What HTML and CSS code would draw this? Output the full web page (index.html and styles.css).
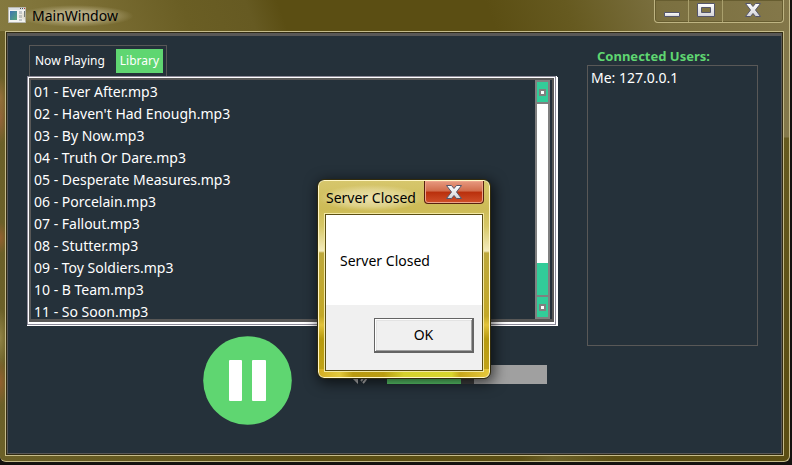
FILE: index.html
```html
<!DOCTYPE html>
<html lang="en">
<head>
<meta charset="utf-8">
<title>MainWindow</title>
<link rel="stylesheet" href="styles.css">
</head>
<body>
<div class="window">
  <header class="titlebar">
    <svg class="app-icon" width="18" height="16" viewBox="0 0 18 16" aria-hidden="true">
      <defs>
        <linearGradient id="pane" x1="0" y1="0" x2="1" y2="1"><stop offset="0" stop-color="#3d74b4"/><stop offset="1" stop-color="#58a878"/></linearGradient>
        <linearGradient id="glyph" x1="0" y1="0" x2="0" y2="1"><stop offset="0" stop-color="#fff"/><stop offset="1" stop-color="#d4d4d8"/></linearGradient>
      </defs>
      <path fill="#f4f4f2" stroke="#b8b8b0" d="M.5 .5h17v15H.5z"/>
      <path fill="#dce0e2" d="M1 1h16v2H1z"/>
      <path fill="#4b5258" d="M12 1h1v1h-1zM14 1h1v1h-1z"/><path fill="#c03a2c" d="M16 1h1v1h-1z"/>
      <path fill="url(#pane)" d="M2 4h7v9H2z"/>
      <path fill="#c4c8cb" d="M11 4h3v3h-3zM11 8h3v3h-3zM11 12h3v2h-3z"/>
      <path fill="#64707a" d="M16 4h1v6h-1z"/>
    </svg>
    <h1 class="title">MainWindow</h1>
    <div class="caption-buttons">
      <button type="button" class="caption" aria-label="Minimize"><svg width="18" height="14" viewBox="0 0 18 14"><path fill="url(#glyph)" stroke="#55566a" d="M1.500 9.500h15v4h-15z"/></svg></button>
      <button type="button" class="caption" aria-label="Maximize"><svg width="18" height="14" viewBox="0 0 18 14"><path fill="url(#glyph)" fill-rule="evenodd" stroke="#55566a" d="M.5 .5h17v13H.5zM4.500 4.500v5h9v-5z"/></svg></button>
      <button type="button" class="caption caption-wide" aria-label="Close"><svg width="16" height="14" viewBox="0 0 16 14"><path fill="url(#glyph)" stroke="#55566a" d="M.5 .5h5L8 3.500 10.500.5h5L10.500 7l5 6.500h-5L8 10.500 5.500 13.500h-5L5.500 7z"/></svg></button>
    </div>
  </header>

  <main class="client">
    <section class="player">
      <nav class="tabs">
        <button type="button" class="tab">Now Playing</button>
        <button type="button" class="tab tab-active">Library</button>
      </nav>
      <div class="library">
        <div class="library-inner">
          <ul class="tracks">
            <li>01 - Ever After.mp3</li>
            <li>02 - Haven't Had Enough.mp3</li>
            <li>03 - By Now.mp3</li>
            <li>04 - Truth Or Dare.mp3</li>
            <li>05 - Desperate Measures.mp3</li>
            <li>06 - Porcelain.mp3</li>
            <li>07 - Fallout.mp3</li>
            <li>08 - Stutter.mp3</li>
            <li>09 - Toy Soldiers.mp3</li>
            <li>10 - B Team.mp3</li>
            <li>11 - So Soon.mp3</li>
          </ul>
          <div class="scrollbar">
            <button type="button" class="step" aria-label="Scroll up"></button>
            <div class="groove"><div class="thumb"></div></div>
            <button type="button" class="step" aria-label="Scroll down"></button>
          </div>
        </div>
      </div>
      <div class="controls">
        <button type="button" class="pause" aria-label="Pause">
          <svg width="89" height="89" viewBox="0 0 89 89"><circle cx="44.500" cy="44.500" r="44.300" fill="#5fd671"/><rect x="26" y="24" width="13" height="41" rx="1" fill="#fff"/><rect x="49" y="24" width="14" height="41" rx="1" fill="#fff"/></svg>
        </button>
        <div class="volume">
          <svg width="20" height="20" viewBox="0 0 20 20" aria-hidden="true"><path fill="#c4c4c4" d="M0 7h2l5-5v18l-7-7z"/><path fill="none" stroke="#c4c4c4" stroke-width="2" d="M10 17q5-5 0-11M12 19q9-9 0-17"/></svg>
          <input class="slider" type="range" min="0" max="100" value="50" aria-label="Volume">
        </div>
      </div>
    </section>

    <aside class="users">
      <h2 class="users-title">Connected Users:</h2>
      <ul class="users-list"><li>Me: 127.0.0.1</li></ul>
    </aside>
  </main>
</div>

<div class="dialog" role="dialog" aria-labelledby="dialog-title">
  <header class="dialog-bar">
    <h2 class="dialog-title" id="dialog-title">Server Closed</h2>
    <button type="button" class="dialog-close" aria-label="Close"><svg width="16" height="14" viewBox="0 0 16 14"><path fill="url(#glyph)" stroke="#55566a" d="M.5 .5h5L8 3.500 10.500.5h5L10.500 7l5 6.500h-5L8 10.500 5.500 13.500h-5L5.500 7z"/></svg></button>
  </header>
  <div class="dialog-body">
    <p class="message">Server Closed</p>
    <footer class="dialog-footer"><button type="button" class="ok">OK</button></footer>
  </div>
</div>
</body>
</html>
```
FILE: styles.css
```css
* { box-sizing: border-box; }

body {
  margin: 0;
  height: 100vh;
  padding: 0 2px 3px 0;
  overflow: hidden;
  background: #14120f;
  color: #fff;
  font: 14px/22px "Noto Sans", "Open Sans", sans-serif;
}

h1, h2, p, ul { margin: 0; padding: 0; font: inherit; list-style: none; }
button { margin: 0; padding: 0; border: 0; background: none; color: inherit; font: inherit; }
svg { display: block; }

.window {
  display: flex;
  flex-direction: column;
  height: 100%;
  padding: 0 5px 5px;
  border: solid #c5bb8a;
  border-width: 0 1px 1px 0;
  border-radius: 0 0 6px 6px;
  background:
    radial-gradient(ellipse 8px 22px at 0 98px, #96703a, transparent),
    radial-gradient(ellipse 8px 26px at 0 118px, #97643a, transparent),
    radial-gradient(ellipse 8px 16px at 0 238px, #95602f, transparent),
    radial-gradient(ellipse 8px 24px at 0 382px, #94602e, transparent),
    radial-gradient(ellipse 8px 30px at 0 338px, #928446, transparent),
    linear-gradient(70deg, #857a40 0, #7b6e34 12%, #6a5e24 24%, #665a22 32%, #5b4e13 36%, #5b4e13 62%, #665a20 72%, #7b7040 84%, #84784a) top / 100% 31px no-repeat,
    linear-gradient(#84784a 137px, #665a20 138px, #5b4e13 400px) right / 8px 100% no-repeat,
    linear-gradient(90deg, #6b6028, #5b4e13 40%, #5b4e13 66%, #6b6028 70%, #5b4e13 78%);
}

.titlebar {
  display: flex;
  flex: none;
  gap: 6px;
  height: 31px;
  padding-left: 3px;
}
.app-icon { margin-top: 7px; }
.title {
  align-self: flex-start;
  margin: 5px auto 0 -16px;
  padding: 0 16px;
  background: radial-gradient(ellipse at center, #b4aa81 30%, #a89d6e99 50%, transparent 70%);
  color: #000;
}
.caption-buttons {
  display: flex;
  height: 23px;
  border: 1px solid #beb482;
  border-top: 0;
  border-radius: 0 0 4px 4px;
  box-shadow: inset 0 0 0 1px #675d30;
}
.caption {
  display: grid;
  place-items: center;
  width: 34px;
  height: 22px;
  padding-bottom: 2px;
  border-right: 1px solid #aaa06d;
}
.caption-wide { width: 60px; border-right: 0; }

.client {
  display: flex;
  flex: 1;
  gap: 29px;
  min-height: 0;
  margin: 2px;
  padding: 9px 23px 27px 19px;
  border: solid #595857;
  border-width: 3px 1px 1px;
  outline: 1px solid #302a12;
  box-shadow: 0 0 0 2px #c5bb8a;
  background: #25313a;
}

.player { display: flex; flex: 1; flex-direction: column; min-width: 0; }
.tabs {
  display: flex;
  flex: none;
  align-self: flex-start;
  gap: 5px;
  height: 31px;
  margin-left: 2px;
  padding: 3px 3px 3px 1px;
  border: 1px solid #595857;
  border-bottom: 0;
}
.tab {
  height: 24px;
  padding: 0 4px;
  font-size: 12px;
  line-height: 24px;
}
.tab:first-child { padding-right: 6px; }
.tab-active { background: #5fd671; }

.library {
  flex: 1;
  min-height: 0;
  margin: 0 2px 1px 0;
  padding: 1px 1px 2px;
  border: 1px solid #8c8a98;
  background: #fff;
  box-shadow: 1px 0 #fff, 2px 1px #fff, 0 1px #fff;
}
.library-inner {
  display: flex;
  height: 100%;
  border: 2px solid #595857;
  border-bottom-width: 3px;
  background: #25313a;
}
.tracks { flex: 1; overflow: hidden; padding: 1px 3px; }
.scrollbar {
  display: flex;
  flex-direction: column;
  gap: 2px;
  width: 15px;
  margin-right: 2px;
  padding: 2px;
  background: #808080;
}
.step { display: grid; place-items: center; flex: none; height: 20px; background: #32cc99; }
.step::before { content: ""; width: 3px; height: 3px; border: 2px solid #808080; background: #fff; box-sizing: content-box; }
.groove { display: flex; flex: 1; flex-direction: column; justify-content: flex-end; background: #fff; }
.thumb { height: 17%; background: #32cc99; }

.controls {
  display: flex;
  flex: none;
  align-items: flex-start;
  justify-content: space-between;
  height: 100px;
  padding: 10px 11px 0 176px;
}
.volume { display: flex; align-items: center; gap: 16px; padding-top: 28px; }
.slider {
  appearance: none;
  width: 160px;
  height: 19px;
  margin: 0;
  background: linear-gradient(90deg, #5fd671 50%, #a0a0a0 50%);
}
.slider::-webkit-slider-thumb { appearance: none; width: 13px; height: 19px; background: #404040; }

.users { display: flex; flex: none; flex-direction: column; width: 171px; padding-bottom: 80px; }
.users-title {
  flex: none;
  height: 20px;
  padding-left: 10px;
  color: #5fd671;
  font: bold 13px/22px "Noto Sans", sans-serif;
}
.users-list { flex: 1; padding: 1px 3px; border: 1px solid #595857; }

.dialog {
  position: absolute;
  top: 180px;
  left: 318px;
  display: flex;
  flex-direction: column;
  width: 172px;
  height: 198px;
  padding: 0 7px 7px;
  border: 1px solid #fff6c4;
  border-radius: 6px;
  outline: 1px solid #302a0c;
  box-shadow: 2px 3px 14px 2px #000a;
  background:
    linear-gradient(90deg, #d4ae24, #e3c93d 12%, #b99a10 20%, #ba9d12 38%, #d5d12e 50%, #d8d62e 78%, #c8a71c 83%, #e6c93c) bottom / 100% 8px no-repeat,
    linear-gradient(#d6c66c, #cdbb56 28px, #d6c766 45px, #f3ebbd 70px, #bda83b 72px, #c3a827 135px, #e2c33a 144px, #b79a0d 158px, #c3a51a);
  color: #000;
}
.dialog-bar { display: flex; flex: none; justify-content: space-between; height: 33px; }
.dialog-title {
  height: 26px;
  margin: 4px -6px 0;
  padding: 0 6px;
  line-height: 26px;
  white-space: nowrap;
  background: radial-gradient(ellipse at center, #eae0ac, #e5da9cbb 45%, transparent 72%);
}
.dialog-close {
  display: grid;
  flex: none;
  place-items: center;
  width: 60px;
  height: 23px;
  margin-right: -2px;
  border: 1px solid #57200f;
  border-top: 0;
  border-radius: 0 0 4px 4px;
  box-shadow: inset 0 0 0 1px #eda48a;
  background: linear-gradient(#e79a80, #d06b4a 46%, #b92f0c 50%, #d0502a);
}
.dialog-body {
  display: flex;
  flex: 1;
  flex-direction: column;
  margin: 1px 0 0;
  outline: 1px solid #5b4e13;
  box-shadow: 0 0 0 2px #f3e9a4;
  background: #fff;
}
.message { flex: 1; padding: 35px 14px 0; }
.dialog-footer { display: flex; justify-content: flex-end; padding: 13px 8px 17px; background: #f0f0f0; }
.ok {
  width: 100px;
  height: 35px;
  border: solid #646464;
  border-width: 1px 2px 2px 1px;
  background: #f0f0f0;
  box-shadow: inset 1px 1px #fff, inset -1px -1px #a0a0a0, inset 2px 2px #e3e3e3;
}
```
